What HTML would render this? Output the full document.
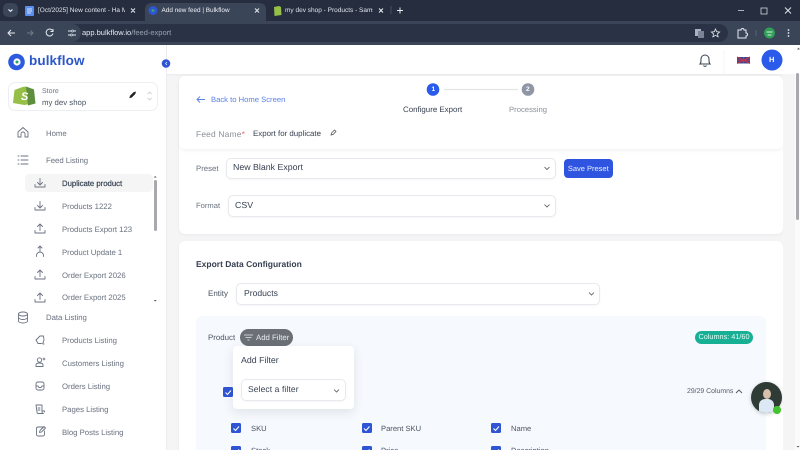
<!DOCTYPE html>
<html><head><meta charset="utf-8"><style>
*{box-sizing:border-box}
html,body{margin:0;padding:0;width:800px;height:450px;overflow:hidden}
body{background:#f5f5f6;font-family:"Liberation Sans",sans-serif;color:#4b5563;text-rendering:geometricPrecision}
#w{position:absolute;left:0;top:0;width:800px;height:450px;overflow:hidden;background:#f5f5f6}
.a{position:absolute}
.t{position:absolute;white-space:nowrap;line-height:12px}
.nav{font-size:7.800px;color:#6b7280;letter-spacing:-.03px}
svg{position:absolute;overflow:visible;fill:none}
.ic{stroke:#6b7280;stroke-width:.9;stroke-linecap:round;stroke-linejoin:round}
.sel{position:absolute;background:#fff;border:1px solid #e7e9ee;border-radius:5px;font-size:8.800px;color:#374151;box-shadow:0 1px 2px rgba(0,0,0,.04)}
.cb{position:absolute;width:10px;height:10px;background:#2f55d4;border-radius:1.5px}
.lb{font-size:7.600px;color:#4b5563}
</style></head><body><div id="w">
<!-- browser chrome -->
<div class="a" style="left:0;top:0;width:800px;height:21px;background:#252d3e"></div>
<div class="a" style="left:0;top:21px;width:800px;height:24px;background:#3a4558"></div>
<div class="a" style="left:145px;top:3px;width:121px;height:19px;background:#3a4558;border-radius:6px 6px 0 0"></div>
<div class="a" style="left:3px;top:3px;width:15px;height:14px;background:#3a4558;border-radius:5px"></div>
<svg style="left:0;top:0" width="800" height="45">
<path d="M8.500 9.500l2 1.800 2-1.800" stroke="#e6e9ef" stroke-width="1.200"/>
<rect x="25" y="6" width="9" height="10" rx="1" fill="#5b8def"/><path d="M27 9h5M27 11h5M27 13h4" stroke="#fff" stroke-width=".7"/>
<circle cx="153" cy="10.500" r="4.500" fill="#2f55d4"/><circle cx="153" cy="10.500" r="1.500" fill="#35a36b"/>
<path d="M274 7l5-1 2 1 .5 8-7 1z" fill="#95bf47"/>
<path d="M131 8.500l4 4M135 8.500l-4 4M255 8.500l4 4M259 8.500l-4 4M379 8.500l4 4M383 8.500l-4 4" stroke="#e6e9ef" stroke-width="1"/>
<path d="M391 6v8" stroke="#56607a" stroke-width=".7"/><path d="M397 10.500h6M400 7.500v6" stroke="#e6e9ef" stroke-width="1"/>
<path d="M738 10.500h6" stroke="#aab1bf" stroke-width="1"/><rect x="761" y="8" width="6" height="6" stroke="#d3d7de" stroke-width=".8"/>
<path d="M785 7.500l6 6M791 7.500l-6 6" stroke="#e6e9ef" stroke-width=".9"/>
<path d="M15 33H8M11 30l-3 3 3 3" stroke="#e6e9ef" stroke-width="1"/>
<path d="M27 33h6M30.500 30.500L33 33l-2.500 2.500" stroke="#737b8b" stroke-width="1"/>
<path d="M52.500 30.500a3.500 3.500 0 1 0 .5 3M53 29v2.500h-2.500" stroke="#e6e9ef" stroke-width="1"/>
</svg>
<div class="a" style="left:63px;top:24px;width:665px;height:18px;background:#2a3345;border-radius:9px"></div>
<div class="a" style="left:63px;top:24px;width:18px;height:18px;background:#3a4558;border-radius:9px"></div>
<svg style="left:0;top:0" width="800" height="45">
<path d="M68 31h3M74 31h2M68 35h2M73 35h3" stroke="#e6e9ef" stroke-width=".9"/><circle cx="72.500" cy="31" r="1" stroke="#e6e9ef" stroke-width=".7"/><circle cx="71.500" cy="35" r="1" stroke="#e6e9ef" stroke-width=".7"/>
<rect x="695" y="29" width="6" height="7" fill="#aab1bf"/><rect x="698" y="31" width="6" height="7" fill="#7b8496"/>
<path d="M715.500 29l1.200 2.700 2.900.3-2.200 1.900.7 2.900-2.600-1.500-2.600 1.500.7-2.900-2.200-1.900 2.900-.3z" stroke="#e6e9ef" stroke-width=".8"/>
<path d="M738 30h3a1.500 1.500 0 0 1 3 0h2v3a1.500 1.500 0 0 1 0 3v2h-8z" stroke="#e6e9ef" stroke-width="1"/>
<path d="M756 30v6" stroke="#687284" stroke-width=".7"/>
<circle cx="769.500" cy="33" r="5.500" fill="#2f9e57"/><path d="M766.500 32h6M767.500 35h4" stroke="#d8f0df" stroke-width="1"/>
<circle cx="788.500" cy="30" r=".9" fill="#e6e9ef"/><circle cx="788.500" cy="33" r=".9" fill="#e6e9ef"/><circle cx="788.500" cy="36" r=".9" fill="#e6e9ef"/>
</svg>
<div class="t" style="left:38px;top:5px;font-size:6.500px;color:#dfe3ea;width:87px;overflow:hidden">[Oct/2025] New content - Ha M</div>
<div class="t" style="left:161.500px;top:5px;font-size:6.400px;color:#eef0f4">Add new feed | Bulkflow</div>
<div class="t" style="left:285px;top:5px;font-size:6.500px;color:#dfe3ea;width:88px;overflow:hidden">my dev shop - Products - Samsu</div>
<div class="t" style="left:82px;top:27px;font-size:7.500px;color:#e8ebf0">app.bulkflow.io<span style="color:#9aa3b2">/feed-export</span></div>

<!-- top bar -->
<div class="a" style="left:0;top:45px;width:800px;height:29px;background:#fff;box-shadow:0 1px 2px rgba(0,0,0,.05)"></div>
<!-- sidebar -->
<div class="a" style="left:0;top:45px;width:167px;height:405px;background:#fff;border-right:1px solid #ebecef"></div>
<svg style="left:0;top:0" width="800" height="120">
<circle cx="16.500" cy="62" r="8.300" fill="#2c5be0"/><circle cx="17" cy="62" r="3.600" fill="#fff"/><circle cx="17" cy="62" r="1.500" fill="#2fa36b"/>
<circle cx="166" cy="63.500" r="4.300" fill="#2f55d4"/><path d="M167 62l-1.500 1.500 1.500 1.500" stroke="#fff" stroke-width=".6"/>
<path d="M700 64c1-1 1-2 1-5a4 4 0 0 1 8 0c0 3 0 4 1 5zM703.500 65.500a1.700 1.700 0 0 0 3 0" stroke="#374151" stroke-width="1"/>
<path d="M724 50v24" stroke="#f0f1f3" stroke-width=".7"/>
<rect x="737" y="57" width="13" height="6.500" fill="#3d4a8a"/><path d="M737 57l13 6.500M750 57l-13 6.500M743.500 57v6.500M737 60.250h13" stroke="#c2334f" stroke-width="1.100"/>
<circle cx="772" cy="60" r="10.500" fill="#2a5bea"/>
<path d="M797 49.500l1.500-2 1.500 2z" fill="#666"/>
</svg>
<div class="t" style="left:29px;top:55px;font-size:13.500px;font-weight:bold;color:#2a56c9;letter-spacing:.1px">bulkflow</div>
<div class="t" style="left:769px;top:54px;font-size:7.500px;font-weight:bold;color:#fff">H</div>

<div class="a" style="left:8px;top:82px;width:150px;height:29px;border:1px solid #eceef1;border-radius:7px;background:#fff"></div>
<svg style="left:0;top:0" width="170" height="120">
<path d="M14.500 90l8-3 3-.5 2 1.500 6 1 1.500 14-10.500 2-11.500-2z" fill="#95bf47"/>
<path d="M26 86.500l8 3 1.500 14-7.500 2z" fill="#5e8e3e"/>
<path d="M137 92l-2.500.7-.5.5-3 3-.7 2.500 2.500-.7 3.500-3.500z" fill="#222" transform="translate(-1 -.5)"/>
<path d="M147.500 94l2-2 2 2M147.500 98l2 2 2-2" stroke="#c3c7ce" stroke-width=".8"/>
</svg>
<div class="t" style="left:21px;top:91px;font-size:11px;font-weight:bold;color:#fff;font-style:italic">S</div>
<div class="t" style="left:42px;top:86px;font-size:7px;color:#6b7280">Store</div>
<div class="t" style="left:42px;top:97px;font-size:7.800px;color:#4b5563">my dev shop</div>

<div class="a" style="left:25px;top:174px;width:128px;height:18px;background:#f5f5f6;border-radius:4px"></div>
<div class="t nav" style="left:46px;top:127.500px">Home</div>
<div class="t nav" style="left:46px;top:154.500px">Feed Listing</div>
<div class="t nav" style="left:62px;top:177.500px;color:#374151;-webkit-text-stroke:.2px #374151">Duplicate product</div>
<div class="t nav" style="left:62px;top:200.500px">Products 1222</div>
<div class="t nav" style="left:62px;top:223.500px">Products Export 123</div>
<div class="t nav" style="left:62px;top:246.500px">Product Update 1</div>
<div class="t nav" style="left:62px;top:269.500px">Order Export 2026</div>
<div class="t nav" style="left:62px;top:292px">Order Export 2025</div>
<div class="t nav" style="left:46px;top:312px">Data Listing</div>
<div class="t nav" style="left:62px;top:335px">Products Listing</div>
<div class="t nav" style="left:62px;top:358px">Customers Listing</div>
<div class="t nav" style="left:62px;top:381px">Orders Listing</div>
<div class="t nav" style="left:62px;top:404px">Pages Listing</div>
<div class="t nav" style="left:62px;top:427px">Blog Posts Listing</div>
<svg class="ic" style="left:0;top:0" width="170" height="450">
<path d="M18 137v-5l5-4.500 5 4.500v5h-3v-3a2 2 0 0 0-4 0v3z"/>
<path d="M21 156h7M21 160h7M21 164h7M18 156h1M18 160h1M18 164h1"/>
<g transform="translate(0 1.500)"><path d="M35 183v2.500h10V183M40 177v6M37.500 181l2.500 2.500 2.500-2.500"/>
<path d="M35 206v2.500h10V206M40 200v6M37.500 204l2.500 2.500 2.500-2.500"/>
<path d="M35 229v2.500h10V229M40 229v-6M37.500 225l2.500-2.500 2.500 2.500"/>
<path d="M35 275v2.500h10V275M40 275v-6M37.500 271l2.500-2.500 2.500 2.500"/>
<path d="M35 298v2.500h10V298M40 298v-6M37.500 294l2.500-2.500 2.500 2.500"/></g>
<path d="M40 246v5M38 248l2-2 2 2M36.500 256.500v-1a3.500 3.500 0 0 1 7 0v1"/>
<ellipse cx="23" cy="314" rx="4.500" ry="2"/><path d="M18.500 314v7c0 1 2 2 4.500 2s4.500-1 4.500-2v-7M18.500 317.500c0 1 2 2 4.500 2s4.500-1 4.500-2"/>
<path d="M36 340l4-4h3.500l.5 4-1 3-2 .5h-3z"/><path d="M43 344h1"/>
<circle cx="39.500" cy="360" r="2.200"/><path d="M36 366.500v-1.500c0-1.500 1-2 3.500-2s3.500.5 3.500 2v1.500zM43 359h2M44 358v2"/>
<rect x="36" y="382" width="8" height="8" rx="2"/><path d="M36 386h2l1 1.500h2l1-1.500h2"/>
<path d="M36 405h6v7a1.500 1.500 0 0 0 1.500 1.500H38a1.500 1.500 0 0 1-1-1.500zM38 408h2M38 410h2M42 411h2.500v1"/>
<path d="M43 428v-1h-5a1.500 1.500 0 0 0-1.500 1.500v6a1.500 1.500 0 0 0 1.500 1.500h5a1.500 1.500 0 0 0 1.500-1.500V431M39.500 432.500l.5-2 4-4 1.500 1.500-4 4z"/>
</svg>
<div class="a" style="left:154px;top:180px;width:2.500px;height:51px;background:#a8a9ac;border-radius:2px"></div>
<svg style="left:0;top:0" width="170" height="310"><path d="M153.700 177.500l1.500-1.500 1.500 1.500zM153.700 300l1.500 1.500 1.500-1.500z" fill="#555"/></svg>

<!-- main top card -->
<div class="a" style="left:179px;top:76px;width:604px;height:158px;background:#fff;border-radius:6px;box-shadow:0 1px 3px rgba(0,0,0,.05)"></div>
<div class="a" style="left:179px;top:76px;width:604px;height:73px;background:#fff;border-radius:6px;box-shadow:0 2px 3px rgba(0,0,0,.05)"></div>
<svg style="left:0;top:0" width="800" height="230">
<path d="M205 99.500h-8M200 96.500l-3 3 3 3" stroke="#5a81e6" stroke-width=".9"/>
<circle cx="433" cy="89.500" r="6.300" fill="#2a5bea"/>
<path d="M444 89.500h74" stroke="#e3e4e7" stroke-width="1.200"/>
<circle cx="528" cy="89.500" r="6.300" fill="#8f96a5"/>
<path d="M331 135l.5-2 3-3 1.500 1.500-3 3z" stroke="#444" stroke-width=".7"/>
</svg>
<div class="t" style="left:211px;top:94px;font-size:7.650px;color:#5a81e6">Back to Home Screen</div>
<div class="t" style="left:431.500px;top:84px;font-size:6.500px;color:#fff;font-weight:bold">1</div>
<div class="t" style="left:526px;top:84px;font-size:6.500px;color:#fff;font-weight:bold">2</div>
<div class="t" style="left:403px;top:104px;font-size:7.900px;color:#374151">Configure Export</div>
<div class="t" style="left:509px;top:104px;font-size:7.700px;color:#8b909a">Processing</div>
<div class="t" style="left:196px;top:128px;font-size:8.400px;color:#8b909a;letter-spacing:.2px">Feed Name<span style="color:#ef6a6a">*</span></div>
<div class="t" style="left:253px;top:128px;font-size:7.900px;color:#374151">Export for duplicate</div>
<div class="t" style="left:196px;top:162.500px;font-size:7.800px;color:#6b7280">Preset</div>
<div class="sel" style="left:226px;top:158px;width:330px;height:21px;padding:3px 6px">New Blank Export</div>
<svg style="left:0;top:0;z-index:2" width="800" height="230"><path d="M544.500 167l2.500 2.500 2.500-2.500M544.500 204.500l2.500 2.500 2.500-2.500" stroke="#555" stroke-width=".8"/></svg>
<div class="a" style="left:564px;top:159px;width:48.500px;height:18.500px;background:#2f55e0;border-radius:4px;color:#eaf0ff;font-size:7.500px;text-align:center;line-height:19px">Save Preset</div>
<div class="t" style="left:196px;top:200px;font-size:7.600px;color:#6b7280">Format</div>
<div class="sel" style="left:228px;top:195px;width:328px;height:22px;padding:4px 6px">CSV</div>

<!-- second card -->
<div class="a" style="left:179px;top:241px;width:604px;height:220px;background:#fff;border-radius:6px;box-shadow:0 1px 3px rgba(0,0,0,.05)"></div>
<div class="t" style="left:196px;top:258px;font-size:8.500px;font-weight:bold;color:#374151">Export Data Configuration</div>
<div class="t" style="left:208px;top:288px;font-size:8px;color:#4b5563">Entity</div>
<div class="sel" style="left:236px;top:283px;width:364px;height:22px;padding:4px 7px;font-size:8.600px">Products</div>
<svg style="left:0;top:0;z-index:2" width="800" height="310"><path d="M589 292.500l2.500 2.500 2.500-2.500" stroke="#555" stroke-width=".8"/></svg>
<div class="a" style="left:196px;top:316px;width:570px;height:140px;background:#f6f9fd;border-radius:6px"></div>
<div class="t" style="left:208px;top:332px;font-size:7.900px;color:#4b5563">Product</div>
<div class="a" style="left:240px;top:328.500px;width:53px;height:17.500px;background:#6b7076;border-radius:9px"></div>
<svg style="left:0;top:0;z-index:2" width="800" height="350"><path d="M244 335h9M245.500 337.500h6M247.500 340h2" stroke="#e8eaee" stroke-width=".8"/></svg>
<div class="t" style="left:256px;top:331.500px;font-size:7.800px;color:#e8eaee;z-index:2">Add Filter</div>
<div class="a" style="left:695px;top:331px;width:58px;height:12.500px;background:#17b095;border-radius:7px;color:#e8fbf6;font-size:7.300px;text-align:center;line-height:12.500px">Columns: 41/60</div>
<div class="t" style="left:687px;top:386px;font-size:6.900px;color:#555d6b">29/29 Columns</div>
<svg style="left:0;top:0" width="800" height="450">
<path d="M736 393l3-3 3 3" stroke="#555" stroke-width=".9"/>
</svg>
<div class="cb" style="left:223px;top:387px"></div>
<div class="cb" style="left:231px;top:423px"></div>
<div class="cb" style="left:361.500px;top:423px"></div>
<div class="cb" style="left:491px;top:423px"></div>
<div class="cb" style="left:231px;top:446px"></div>
<div class="cb" style="left:361.500px;top:446px"></div>
<div class="cb" style="left:491px;top:446px"></div>
<svg style="left:0;top:0" width="800" height="450"><g stroke="#fff" stroke-width="1.100">
<path d="M225.500 392.500l2 2 3.500-4M233.500 428.500l2 2 3.500-4M364 428.500l2 2 3.500-4M493.500 428.500l2 2 3.500-4M233.500 451.500l2 2 3.500-4M364 451.500l2 2 3.500-4M493.500 451.500l2 2 3.500-4"/></g></svg>
<div class="t lb" style="left:251px;top:422.500px">SKU</div>
<div class="t lb" style="left:381px;top:422.500px">Parent SKU</div>
<div class="t lb" style="left:511px;top:422.500px">Name</div>
<div class="t lb" style="left:251px;top:445px">Stock</div>
<div class="t lb" style="left:381px;top:445px">Price</div>
<div class="t lb" style="left:511px;top:445px">Description</div>

<!-- popover -->
<div class="a" style="left:233px;top:346px;width:121px;height:63px;background:#fff;border-radius:4px;box-shadow:0 3px 10px rgba(60,70,90,.12)"></div>
<div class="t" style="left:241px;top:354px;font-size:8.800px;color:#374151">Add Filter</div>
<div class="sel" style="left:241px;top:379px;width:105px;height:22px;padding:4px 6px;font-size:8.500px;letter-spacing:.1px">Select a filter</div>
<svg style="left:0;top:0" width="800" height="450"><path d="M334 389.500l2.500 2.500 2.500-2.500" stroke="#555" stroke-width=".8"/></svg>

<!-- avatar -->
<div class="a" style="left:751px;top:382px;width:31px;height:31px;border-radius:50%;background:#2f3b35;box-shadow:0 1px 4px rgba(0,0,0,.2);overflow:hidden">
<div class="a" style="left:12px;top:7px;width:8px;height:10px;border-radius:50%;background:#d8c0ac"></div>
<div class="a" style="left:8px;top:17px;width:15px;height:14px;border-radius:6px 6px 0 0;background:#dce8f4"></div>
</div>
<div class="a" style="left:773.300px;top:406px;width:7.500px;height:7.500px;border-radius:50%;background:#43c32f"></div>
<!-- page scrollbar -->
<div class="a" style="left:783px;top:74px;width:12px;height:376px;background:#f5f5f6"></div>
<div class="a" style="left:795px;top:74px;width:5px;height:376px;background:#fbfbfb"></div>
<div class="a" style="left:796px;top:73px;width:3px;height:147px;background:#a8a9ac;border-radius:2px"></div>
<svg style="left:0;top:0" width="800" height="450"><path d="M796.500 446l1.500 1.500 1.500-1.500z" fill="#555"/></svg>
</div></body></html>
